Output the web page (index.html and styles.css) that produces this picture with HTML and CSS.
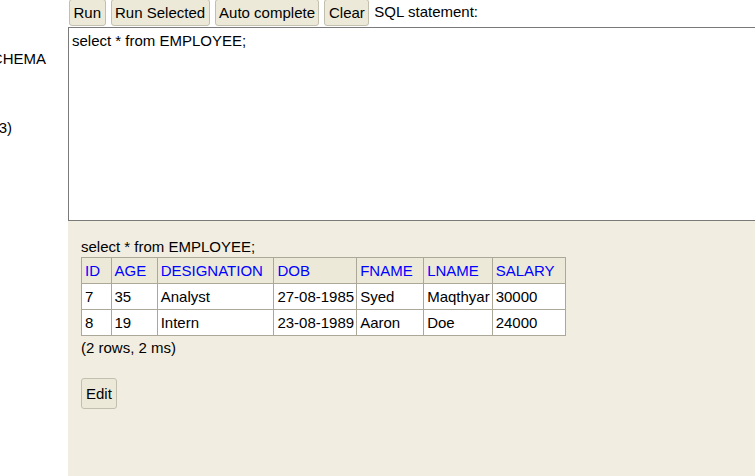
FILE: index.html
```html
<!DOCTYPE html>
<html>
<head>
<meta charset="utf-8">
<title>H2 Console</title>
<link rel="stylesheet" href="styles.css">
</head>
<body>
<div class="page">
  <div class="tree">
    <div class="tree-row tree-schema"><span>INFORMATION_SCHEMA</span></div>
    <div class="tree-row tree-version"><span>H2 2.1.214 (2022-06-13)</span></div>
  </div>
  <div class="main">
    <div class="toolbar">
      <button class="btn">Run</button>
      <button class="btn">Run Selected</button>
      <button class="btn">Auto complete</button>
      <button class="btn">Clear</button>
      <span class="label">SQL statement:</span>
    </div>
    <textarea class="sql" spellcheck="false">select * from EMPLOYEE;</textarea>
    <div class="result">
      <div class="query">select * from EMPLOYEE;</div>
      <table class="grid">
        <tr><th>ID</th><th>AGE</th><th>DESIGNATION</th><th>DOB</th><th>FNAME</th><th>LNAME</th><th>SALARY</th></tr>
        <tr><td>7</td><td>35</td><td>Analyst</td><td>27-08-1985</td><td>Syed</td><td>Maqthyar</td><td>30000</td></tr>
        <tr><td>8</td><td>19</td><td>Intern</td><td>23-08-1989</td><td>Aaron</td><td>Doe</td><td>24000</td></tr>
      </table>
      <div class="status">(2 rows, 2 ms)</div>
      <button class="btn btn-edit">Edit</button>
    </div>
  </div>
</div>
</body>
</html>
```
FILE: styles.css
```css
html, body {
  margin: 0;
  padding: 0;
  overflow: hidden;
  background: #fff;
}
body {
  font-family: "Liberation Sans", Arial, sans-serif;
  font-size: 15px;
  line-height: 17px;
  color: #000;
}
.page {
  display: flex;
  width: 820px;
  height: 476px;
}
.tree {
  width: 68px;
  flex: none;
  overflow: hidden;
  background: #fff;
}
.tree-row {
  display: flex;
  justify-content: flex-end;
  white-space: nowrap;
}
.tree-schema {
  margin-top: 50px;
  padding-right: 22px;
}
.tree-version {
  margin-top: 52px;
  padding-right: 56px;
}
.main {
  flex: 1;
  display: flex;
  flex-direction: column;
}
.toolbar {
  height: 27px;
  padding-left: 1px;
  display: flex;
  align-items: flex-start;
  gap: 5px;
  white-space: nowrap;
}
.btn {
  font-family: "Liberation Sans", Arial, sans-serif;
  font-size: 15px;
  line-height: 17px;
  color: #000;
  background: #ece9d8;
  border: 1px solid #c3bfae;
  border-radius: 3px;
  padding: 4px 3.5px;
  margin: -1px 0 0 0;
}
.label {
  padding-top: 3px;
  margin-left: 0;
}
.sql {
  display: block;
  height: 194px;
  box-sizing: border-box;
  width: 100%;
  margin: 0;
  border: 1px solid #7a7a7a;
  padding: 4px 3px;
  font-family: "Liberation Sans", Arial, sans-serif;
  font-size: 15px;
  line-height: 17px;
  color: #000;
  resize: none;
  outline: none;
  background: #fff;
}
.result {
  flex: 1;
  background: #f1eee1;
  padding: 17px 13px 0 13px;
}
.grid {
  border-collapse: collapse;
  margin-top: 2px;
}
.grid th, .grid td {
  border: 1px solid #aca899;
  text-align: left;
  font-weight: normal;
  padding: 4px 3px 4px 3px;
  white-space: nowrap;
}
.grid th {
  background: #ece9d8;
  color: #0000ff;
  padding-right: 10.5px;
}
.grid td {
  background: #fff;
  padding-right: 2px;
}
.status {
  margin-top: 3px;
}
.btn-edit {
  margin-top: 22px;
  padding: 6px 4px;
}
```
